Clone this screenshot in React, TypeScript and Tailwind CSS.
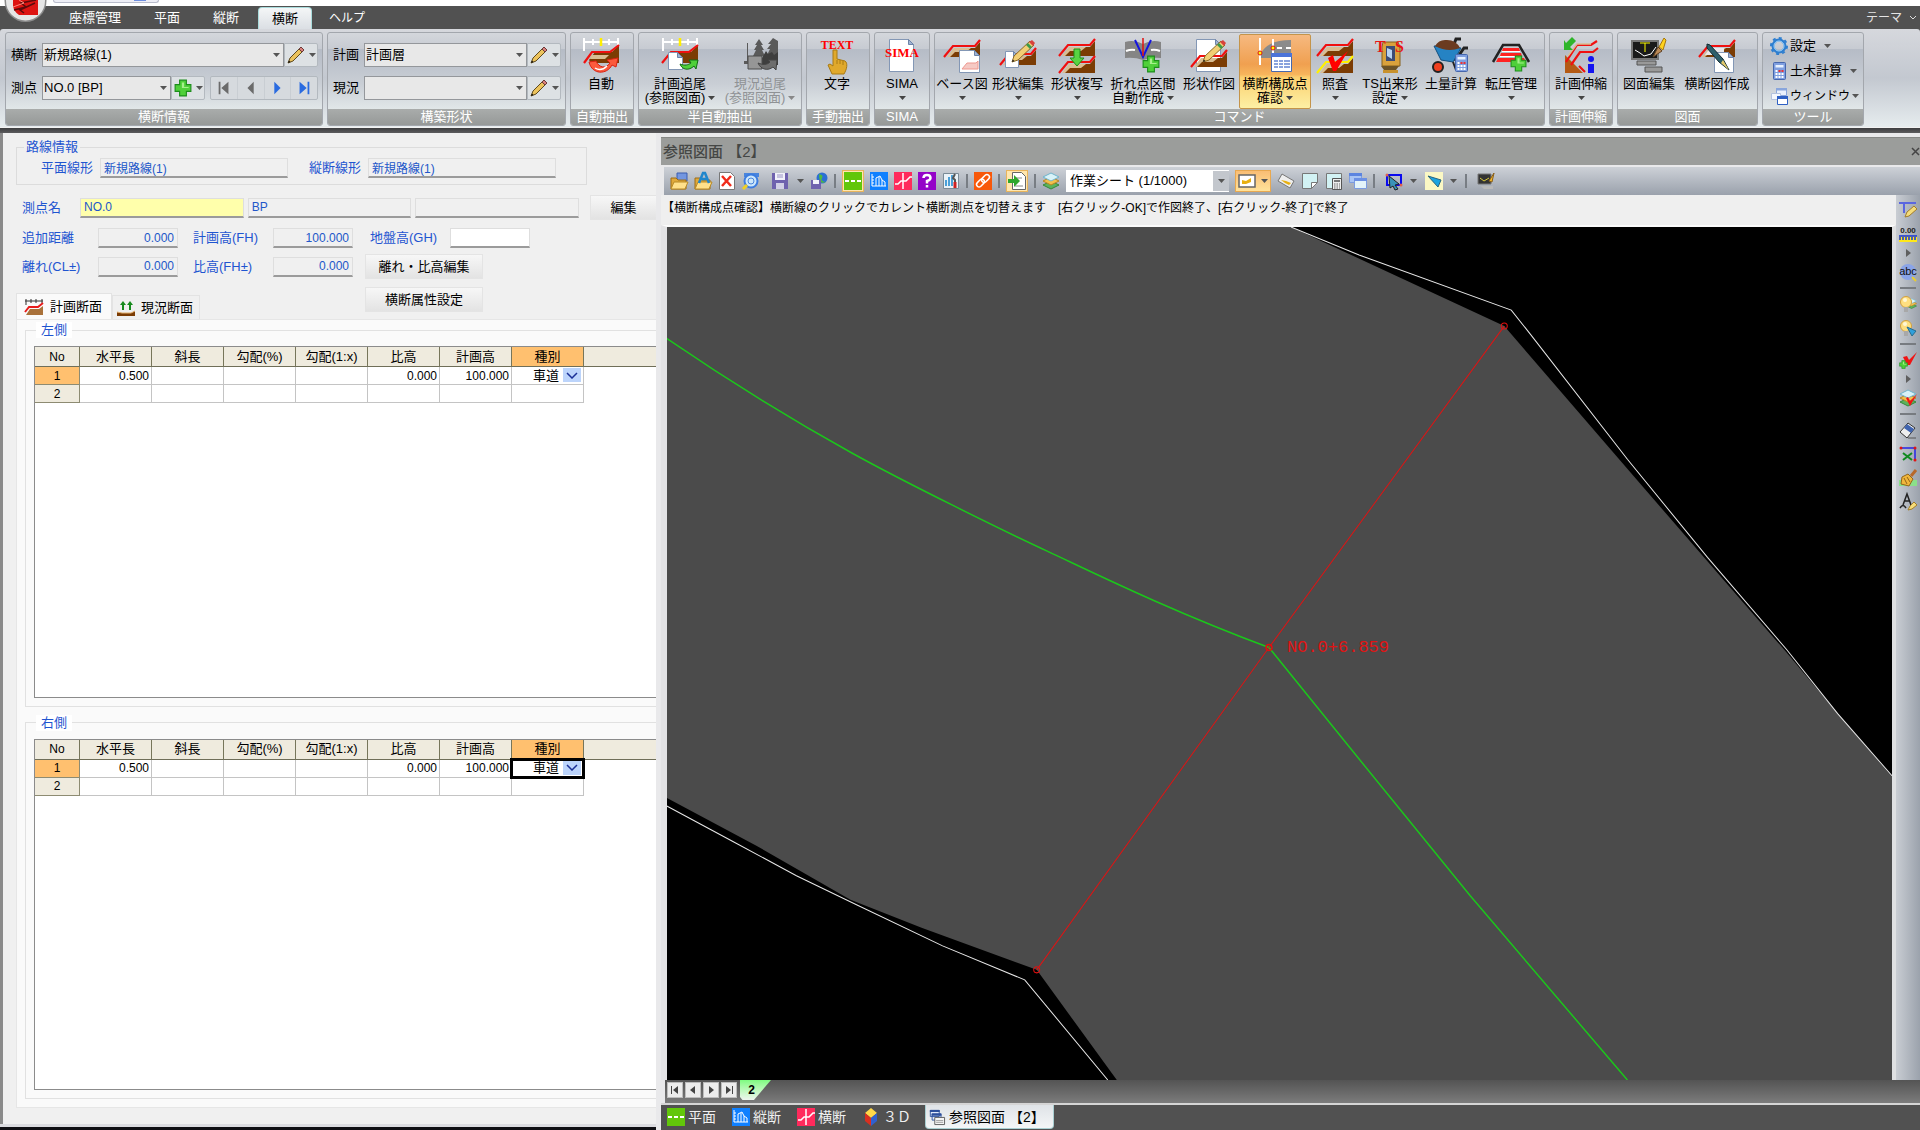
import React from 'react'

type BoxProps = { children: React.ReactNode; size?: number; view?: number }

function Svg({ children, size = 18, view = 18 }: BoxProps) {
  return (
    <svg width={size} height={size} viewBox={`0 0 ${view} ${view}`} fill="none" className="shrink-0 overflow-visible" aria-hidden="true">
      {children}
    </svg>
  )
}

function Caret({ className = 'text-[#555]' }: { className?: string }) {
  return (
    <svg width="7" height="4" viewBox="0 0 7 4" className={`shrink-0 ${className}`} aria-hidden="true">
      <path d="M0 0h7L3.5 4z" fill="currentColor" />
    </svg>
  )
}

/* ---------- shared icon parts ---------- */

// Road cross-section: brown embankment with the red design line on top
function Road({ y = 0, line = '#f01010' }: { y?: number; line?: string }) {
  return (
    <g transform={`translate(0 ${y})`}>
      <path d="M5 17 11 8h20l5-6v15z" fill="#7b3c04" />
      <path d="M3 17 10 8h17l-5 4H11l-5 5z" fill="#d9bd92" />
      <path d="M0 17 9 6h22l5-6" stroke={line} strokeWidth="2.2" />
    </g>
  )
}

function Sheet({ x, y, w = 15, h = 18 }: { x: number; y: number; w?: number; h?: number }) {
  return (
    <g transform={`translate(${x} ${y})`}>
      <path d={`M.5.5h${w - 6}l5 5v${h - 6}h-${w - 1}z`} fill="#fff" stroke="#8397b5" />
      <path d={`M${w - 5.5}.5v5h5z`} fill="#9fb4d4" stroke="#6d83a8" />
    </g>
  )
}

function PencilShape() {
  return (
    <>
      <path d="m12 24 2-6L30 3l4 4-16 15z" fill="#f2cf74" stroke="#8d6a25" />
      <path d="m26 7 4 4 2-2-4-4z" fill="#3c9a4a" />
      <path d="m29 4 4 4 2-3-3-3z" fill="#d8413c" />
      <path d="m12 24 .8-2.6 1.7 1.7z" fill="#222" />
    </>
  )
}

function Plus({ x, y, s = 16 }: { x: number; y: number; s?: number }) {
  return (
    <svg x={x} y={y} width={s} height={s} viewBox="0 0 16 16">
      <path d="M5 1h6v4h4v6h-4v4H5v-4H1V5h4z" fill="#4fd03a" stroke="#1d8d1c" />
      <path d="M7 3h2v4h4v1H7z" fill="#a6f08c" />
    </svg>
  )
}

function Ruler() {
  return (
    <>
      <path d="M1 0v13M35 0v8M0 4h36M10 1v6M26 1v6" stroke="#fff" strokeWidth="2" />
      <path d="M18 0v8" stroke="#ffef00" strokeWidth="2.5" />
    </>
  )
}

function Calc({ x, y }: { x: number; y: number }) {
  return (
    <g transform={`translate(${x} ${y})`}>
      <rect x=".5" y=".5" width="12" height="17" rx="1" fill="#7f9fe0" stroke="#4667ad" />
      <path d="M2.5 3h8v2.5h-8z" fill="#e8f2ff" />
      <path d="M2.5 8h2v2h-2zM2.5 11h2v2h-2zM2.5 14h2v2h-2zM5.5 11h2v2h-2zM5.5 14h2v2h-2zM8.5 11h2v2h-2zM8.5 14h2v2h-2z" fill="#fff" />
      <path d="M5.5 8h2v2h-2zM8.5 8h2v2h-2z" fill="#f03030" />
    </g>
  )
}

/* ---------- ribbon icons, 36 x 36 ---------- */

const ribbonIcons: Record<string, React.ReactNode> = {
  auto: (
    <>
      <Ruler />
      <path d="M6 22 12 14h17l7-7v18H8z" fill="#7b3c04" />
      <path d="M8 17h18l-4 4H7z" fill="#d9bd92" />
      <path d="M1 25 9 14h18l9-7" stroke="#f01010" strokeWidth="2.2" />
      <path d="M6 24c3 13 18 13 23 3l4 2 2-9-11 2 3 3c-4 6-11 5-14-2z" fill="#fb5a3c" stroke="#d92213" />
      <path d="M12 30q6 4 12-2" stroke="#fff" strokeWidth="1.5" />
    </>
  ),
  trace: (
    <>
      <Ruler />
      <path d="M6 24 12 14h17l7-7v18H8z" fill="#7b3c04" />
      <path d="M0 25 9 14h18l9-7" stroke="#f01010" strokeWidth="2.2" />
      <Sheet x={6} y={14} />
      <path d="M18 26c5 2 8 1 11-1l-2-3h9l-2 9-2-3c-5 5-12 4-14-2z" fill="#4fd03a" stroke="#116d16" />
    </>
  ),
  traceOff: (
    <g fill="#5a5a5a">
      <path d="m17 1-4 6h2l-3 5h2l-3 6h12l-3-6h2l-3-5h2zM31 0l-5 6h3l-4 5h3l-3 6h11V3zM5 5v18H2v3h10v-3H6V5z" />
      <path d="m20 20 4-7 2 3 4-2 2 3 4-3v13H20z" fill="#3e3e3e" />
      <path d="M6 18h14v13H6z" fill="#969696" stroke="#4d4d4d" />
      <path d="M16 25c5 2 9 2 12-1l-2-2h9l-1 10-3-3c-5 4-12 3-15-4z" fill="#6d6d6d" stroke="#444" />
    </g>
  ),
  text: (
    <>
      <text x="18" y="11" textAnchor="middle" fontSize="12" fontWeight="700" fill="#f00" fontFamily="Liberation Serif, serif">TEXT</text>
      <path d="M14 12h4v9l8 2c3 2 2 8-1 13H13l-4-9 2-1 3 2z" fill="#e0a92c" stroke="#a87a14" />
      <path d="M18 22v4m3-4v4m3-3v4" stroke="#a87a14" />
    </>
  ),
  sima: (
    <>
      <Sheet x={5} y={1} w={25} h={33} />
      <text x="18" y="19" textAnchor="middle" fontSize="13" fontWeight="700" fill="#f00" fontFamily="Liberation Serif, serif">SIMA</text>
    </>
  ),
  base: (
    <>
      <Road y={2} />
      <Sheet x={15} y={12} w={21} h={23} />
      <path d="m18 31 5-6h9l2-2v8z" fill="#f5c9c4" stroke="#ee9890" />
    </>
  ),
  edit: (
    <>
      <g transform="translate(0 10)"><Road /></g>
      <Sheet x={5} y={13} w={14} h={17} />
      <PencilShape />
    </>
  ),
  copy: (
    <>
      <Road y={1} />
      <Road y={18} />
      <path d="M15 11h6v9h4l-7 8-7-8h4z" fill="#58d442" stroke="#208e1c" />
    </>
  ),
  bend: (
    <>
      <path d="M0 4q9-3 18 2 9-5 18-2v16q-10-1-18 2Q10 19 0 20z" fill="#858585" />
      <path d="M1 13q5-2 9-1M26 12q4-1 9 1" stroke="#fff" strokeWidth="2" />
      <path d="m10 2 8 17 8-17" stroke="#1414e0" strokeWidth="2" />
      <path d="M18 0v18" stroke="#e01010" strokeWidth="1.5" />
      <Plus x={17} y={17} s={18} />
    </>
  ),
  draw: (
    <>
      <Sheet x={5} y={1} w={25} h={33} />
      <Road y={12} />
      <PencilShape />
    </>
  ),
  confirm: (
    <>
      <path d="M2 20C6 7 17 2 34 2v18z" fill="#8b8b8b" />
      <path d="M3 0v27M16 1v16M20 10h5M29 10h5" stroke="#fff" strokeWidth="2" />
      <circle cx="3" cy="15" r="2" fill="#ff0" stroke="#e01010" />
      <circle cx="16" cy="10" r="2" fill="#ff0" stroke="#e01010" />
      <path d="M14.5 15.5h20v18h-20z" fill="#fff" stroke="#4667ad" />
      <path d="M14 15h21v4H14z" fill="#4c74d8" />
      <path d="M17 22h16v2H17zm0 3h16v2H17zm0 3h16v2H17z" fill="#8aa3dd" />
      <path d="M21.5 21v11M26.5 21v11" stroke="#fff" />
    </>
  ),
  check: (
    <>
      <Road y={1} />
      <Road y={18} line="#fff000" />
      <path d="m11 20 5-3 2 7L31 13 19 33h-3z" fill="#f00" />
    </>
  ),
  ts: (
    <>
      <path d="M11 4h15l2 5v19H10V9z" fill="#d9a23c" stroke="#85601d" />
      <path d="M14 8h9v15h-9z" fill="#3d4c74" />
      <path d="m15 10 5 2v9l-5-3z" fill="#b9d3ef" />
      <path d="M9 28h18l-3 4H12z" fill="#6d5426" />
      <path d="M11 32h15v3H11z" fill="#c8922e" />
      <text x="3" y="14" fontSize="16" fontWeight="700" fill="#e81414" fontFamily="Liberation Serif, serif">T</text>
      <text x="23" y="14" fontSize="16" fontWeight="700" fill="#e81414" fontFamily="Liberation Serif, serif">S</text>
    </>
  ),
  barrow: (
    <>
      <path d="M28 1h-5l-3 8M35 10h-4l-9 13" stroke="#222" strokeWidth="3" />
      <path d="m1 8 27 2-8 14-12-2z" fill="#2583c4" stroke="#134f80" />
      <path d="M2 8q4-7 12-6 9 0 13 8-12 5-25-2z" fill="#6b3b20" />
      <circle cx="5" cy="29" r="5" fill="#f04020" stroke="#222" strokeWidth="2" />
      <path d="m20 24 3 8" stroke="#222" strokeWidth="2" />
      <Calc x={22} y={16} />
    </>
  ),
  roll: (
    <>
      <path d="M0 24 10 7h16l10 17" stroke="#222" strokeWidth="2.5" />
      <path d="M10 10h16l1 3H9zM8 15h20l1 3H7zM5 20h26l2 4H3z" fill="#f22" />
      <path d="M9 13.5h18M7 18.5h22" stroke="#fff" />
      <Plus x={17} y={17} s={17} />
    </>
  ),
  stretch: (
    <>
      <path d="M2 35V17l18 18z" fill="#b45a14" />
      <path d="M3 24 14 7h14l6-4M8 27l9-13h13l5-4M22 34 16 28" stroke="#f01010" strokeWidth="2.2" />
      <path d="m5 18 9-12h14" stroke="#d9bd92" strokeWidth="1.5" />
      <path d="M12 0 6 6 4 3v10h9l-3-3 6-6z" fill="#2fb52a" transform="translate(-3 -1)" />
      <circle cx="28" cy="21" r="3" fill="#1414f0" />
      <path d="M25 26h6v9h-6z" fill="#1414f0" />
    </>
  ),
  drawing: (
    <>
      <path d="M1 3h26v18H1z" fill="#1a1a1a" stroke="#777" strokeWidth="2" />
      <path d="M14 5v9M9 5h10" stroke="#ff0" />
      <path d="m4 12 5 3 4 3 7-2 5-7" stroke="#fff" />
      <path d="M6 23h19v4H6zM14 29h17v5H14z" fill="#999" stroke="#555" />
      <path d="m33 0-5 9 4 3 3-10z" fill="#ffd21c" stroke="#a5750c" />
      <path d="m27 9 4 4-9 6z" fill="#bd8b58" stroke="#614122" />
    </>
  ),
  section: (
    <>
      <Road y={2} />
      <path d="M6 17 11 10h14v7z" fill="#e9e9ec" />
      <Sheet x={15} y={14} w={20} h={21} />
      <path d="m8 6 3 1 13 14 6 11-10-8L8 10z" fill="#2e5f6b" stroke="#102a30" />
      <path d="m24 22 6 10-8-7z" fill="#e3c96a" />
    </>
  ),
}

/* ---------- ribbon pieces ---------- */

function RibbonGroup({ title, children, className = '' }: { title: string; children: React.ReactNode; className?: string }) {
  return (
    <section
      className={`flex flex-col shrink-0 h-[94px] rounded-[3px] border border-[#a3a7ad] overflow-hidden bg-[linear-gradient(#d4d7dc_0%,#c7cbd2_17%,#b6bcc6_18%,#c9ced5_55%,#e3e9ea_85%)] ${className}`}
    >
      <div className="flex flex-1 min-h-0">{children}</div>
      <h2 className="h-4 leading-4 text-center text-white text-[13px] bg-gradient-to-b from-[#a9acab] to-[#969998]">{title}</h2>
    </section>
  )
}

type BigButtonProps = {
  icon: string
  label: string
  sub?: string
  menu?: boolean
  active?: boolean
  disabled?: boolean
  className: string
}

function BigButton({ icon, label, sub, menu, active, disabled, className }: BigButtonProps) {
  const look = active
    ? 'border-[#c4944a] bg-[linear-gradient(#f6b980_0%,#f0a050_40%,#f7b55c_54%,#fbd070_58%,#fdf0a4_100%)]'
    : 'border-transparent'
  return (
    <button
      type="button"
      disabled={disabled}
      className={`flex flex-col items-center shrink-0 h-[75px] mt-px pt-[3px] border rounded-[2px] whitespace-nowrap leading-[14px] ${look} ${disabled ? 'text-[#8f9295]' : 'text-black'} ${className}`}
    >
      <Svg size={36} view={36}>{ribbonIcons[icon]}</Svg>
      <span className="mt-[3px]">{label}</span>
      <span className="flex items-center justify-center gap-[3px] h-[14px]">
        {sub}
        {menu && <Caret className={disabled ? 'text-[#888]' : 'text-[#444]'} />}
      </span>
    </button>
  )
}

function PencilIcon() {
  return (
    <Svg>
      <path d="m1 17 2-5L13 2l3 3L6 15z" fill="#ecc35c" stroke="#5f4a1d" />
      <path d="m12 3 3 3 2-2-3-3z" fill="#d9807c" stroke="#6b3a38" />
      <path d="m1 17 1-2.500 1.500 1.500z" fill="#111" />
    </Svg>
  )
}

function SmallMenu({ label, children }: { label: string; children: React.ReactNode }) {
  return (
    <button
      type="button"
      aria-label={label}
      className="flex items-center justify-center gap-1 w-[34px] h-6 border border-[#b3b9bf] rounded-r-[2px] bg-[#dde1e4]"
    >
      {children}
      <Caret />
    </button>
  )
}

function Combo({ id, label, value, className }: { id: string; label: string; value: string; className: string }) {
  return (
    <>
      <label htmlFor={id} className="w-[31px] shrink-0 whitespace-nowrap">{label}</label>
      <div className={`relative h-6 ${className}`}>
        <select id={id} className="w-full h-full appearance-none bg-[#e8e8e8] border border-[#94979b] pl-px pr-4 text-[13px]">
          <option>{value}</option>
        </select>
        <span className="absolute right-1 top-2 pointer-events-none flex h-2 items-center">
          <Caret />
        </span>
      </div>
    </>
  )
}

function Ribbon() {
  return (
    <div className="flex gap-[4px] pl-[5px] pt-[3px] h-[99px] bg-gradient-to-b from-[#d6d8dd] via-[#c3c8d0] to-[#e6ecee] rounded-t-[3px] border-b border-[#f2f2f2]">
      <RibbonGroup title="横断情報" className="w-[318px]">
        <div className="flex flex-col gap-[9px] pl-[5px] pt-[10px]">
          <div className="flex items-center">
            <Combo id="oudan" label="横断" value="新規路線(1)" className="w-[242px]" />
            <SmallMenu label="横断の編集"><PencilIcon /></SmallMenu>
          </div>
          <div className="flex items-center">
            <Combo id="sokuten" label="測点" value="NO.0 [BP]" className="w-[129px]" />
            <SmallMenu label="測点の追加"><Svg><Plus x={0} y={0} s={18} /></Svg></SmallMenu>
            <div className="flex ml-[5px] w-[108px] h-6 border border-[#b3b9bf] rounded-[2px] bg-[#d6dade]">
              <NavButton label="先頭" color="#6b6b6b" d="M3 2h2v14H3zM14 2v14L6 9z" />
              <NavButton label="前" color="#6b6b6b" d="M12 2v14L5 9z" />
              <NavButton label="次" color="#2a6be0" d="M6 2v14l7-7z" />
              <NavButton label="末尾" color="#2a6be0" d="M13 2h2v14h-2zM4 2v14l8-7z" />
            </div>
          </div>
        </div>
      </RibbonGroup>
      <RibbonGroup title="構築形状" className="w-[239px]">
        <div className="flex flex-col gap-[9px] pl-[5px] pt-[10px]">
          <div className="flex items-center">
            <Combo id="keikaku" label="計画" value="計画層" className="w-[163px]" />
            <SmallMenu label="計画の編集"><PencilIcon /></SmallMenu>
          </div>
          <div className="flex items-center">
            <Combo id="genkyo" label="現況" value="" className="w-[163px]" />
            <SmallMenu label="現況の編集"><PencilIcon /></SmallMenu>
          </div>
        </div>
      </RibbonGroup>
      <RibbonGroup title="自動抽出" className="w-[64px]">
        <BigButton icon="auto" label="自動" className="w-[60px]" />
      </RibbonGroup>
      <RibbonGroup title="半自動抽出" className="w-[164px]">
        <BigButton icon="trace" label="計画追尾" sub="(参照図面)" menu className="w-[82px]" />
        <BigButton icon="traceOff" label="現況追尾" sub="(参照図面)" menu disabled className="w-[78px]" />
      </RibbonGroup>
      <RibbonGroup title="手動抽出" className="w-[64px]">
        <BigButton icon="text" label="文字" className="w-[60px]" />
      </RibbonGroup>
      <RibbonGroup title="SIMA" className="w-[56px]">
        <BigButton icon="sima" label="SIMA" menu className="w-full" />
      </RibbonGroup>
      <RibbonGroup title="コマンド" className="w-[611px]">
        <BigButton icon="base" label="ベース図" menu className="w-[54px]" />
        <BigButton icon="edit" label="形状編集" menu className="w-[58px]" />
        <BigButton icon="copy" label="形状複写" menu className="w-[60px]" />
        <BigButton icon="bend" label="折れ点区間" sub="自動作成" menu className="w-[72px]" />
        <BigButton icon="draw" label="形状作図" className="w-[60px]" />
        <BigButton icon="confirm" label="横断構成点" sub="確認" menu active className="w-[72px]" />
        <BigButton icon="check" label="照査" menu className="w-[48px]" />
        <BigButton icon="ts" label="TS出来形" sub="設定" menu className="w-[62px]" />
        <BigButton icon="barrow" label="土量計算" className="w-[60px]" />
        <BigButton icon="roll" label="転圧管理" menu className="w-[60px]" />
      </RibbonGroup>
      <RibbonGroup title="計画伸縮" className="w-[64px]">
        <BigButton icon="stretch" label="計画伸縮" menu className="w-full" />
      </RibbonGroup>
      <RibbonGroup title="図面" className="w-[141px]">
        <BigButton icon="drawing" label="図面編集" className="w-[62px]" />
        <BigButton icon="section" label="横断図作成" className="w-[74px]" />
      </RibbonGroup>
      <RibbonGroup title="ツール" className="w-[102px]">
        <div className="flex flex-col gap-[7px] pl-[7px] pt-1">
          <ToolItem label="設定">
            <circle cx="9" cy="9" r="6" stroke="#2f7fd0" strokeWidth="3" />
            <circle cx="9" cy="9" r="8" stroke="#2f7fd0" strokeWidth="2" strokeDasharray="3 3.2" />
            <circle cx="9" cy="9" r="5" stroke="#a4d4f8" />
          </ToolItem>
          <ToolItem label="土木計算"><Calc x={3} y={0} /></ToolItem>
          <ToolItem label="ウィンドウ" small>
            <path d="M6.5 1.5h10v7h-10z" fill="#eaf1fd" stroke="#8aa6dc" />
            <path d="M6 1h11v2.5H6z" fill="#8aa6dc" />
            <path d="M1.5 6.5h9v6h-9z" fill="#f4f7fd" stroke="#b3c2de" />
            <path d="M7.5 9.5h10v8h-10z" fill="#fff" stroke="#2e60c4" />
            <path d="M7 9h11v3H7z" fill="#2e60c4" />
          </ToolItem>
        </div>
      </RibbonGroup>
    </div>
  )
}

function NavButton({ label, color, d }: { label: string; color: string; d: string }) {
  return (
    <button type="button" aria-label={label} className="flex flex-1 items-center justify-center border-r border-[#c9ced3] last:border-r-0">
      <Svg size={16}><path d={d} fill={color} /></Svg>
    </button>
  )
}

function ToolItem({ label, small, children }: { label: string; small?: boolean; children: React.ReactNode }) {
  return (
    <button type="button" className={`flex items-center gap-[2px] h-[18px] whitespace-nowrap ${small ? 'text-[12px]' : ''}`}>
      <Svg>{children}</Svg>
      {label}
      <span className={small ? '' : 'pl-[6px]'}><Caret /></span>
    </button>
  )
}

/* ---------- header ---------- */

function Header() {
  const tab = 'h-full px-[14px] text-white text-[13px]'
  return (
    <header className="relative">
      <div className="h-[6px] bg-white">
        <div className="ml-[53px] w-[106px] h-[3px] rounded-b-full border border-t-0 border-[#b9bccb] bg-[#eeeef6]">
          <div className="ml-20 w-3 h-px bg-[#6f8fe0]" />
        </div>
      </div>
      <nav className="flex items-stretch gap-[5px] h-[23px] pl-[55px] bg-[#515151]">
        <button type="button" className={tab}>座標管理</button>
        <button type="button" className={tab}>平面</button>
        <button type="button" className={tab}>縦断</button>
        <button
          type="button"
          className="mt-px px-[13px] text-[13px] text-black rounded-t-[4px] border border-b-0 border-[#a9dcdc] bg-gradient-to-b from-[#f4f6f7] to-[#dbdfe4]"
        >
          横断
        </button>
        <button type="button" className="h-full px-3 text-white text-[12px]">ヘルプ</button>
        <button type="button" className="flex items-center gap-2 ml-auto pr-1 text-[12px] text-[#e4e4e4]">
          テーマ
          <svg width="6" height="4" viewBox="0 0 6 4" fill="none" aria-hidden="true"><path d="m0 0 3 3 3-3" stroke="#ddd" /></svg>
        </button>
      </nav>
      <svg className="absolute left-1 top-0" width="44" height="23" viewBox="0 0 44 23" role="img" aria-label="アプリケーションメニュー">
        <circle cx="21.5" cy="1" r="21" fill="#8c8c8c" />
        <circle cx="21.5" cy="1" r="19.5" fill="#e6e6e6" />
        <path d="M9 0h25v15H15q-5-3-6-9z" fill="#dd1412" />
        <path d="m10 10 12-3-5-4 15-3M20 13l-4-3 15-7" stroke="#5c0b0b" strokeWidth="1.5" fill="none" />
        <path d="m9 7 11-4-5-3" stroke="#ff8a7c" fill="none" />
      </svg>
      <Ribbon />
      <div className="h-[5px] bg-gradient-to-b from-[#3d3d3f] to-[#5c5c5e]" />
    </header>
  )
}

/* ---------- left panel ---------- */

type FieldProps = { id: string; label: string; value: string; labelClass: string; inputClass: string; right?: boolean }

const fieldBase = 'h-5 border border-[#dedede] border-b-2 border-b-[#9b9b9b] text-[12px] text-[#2257c9] px-[3px]'

function Field({ id, label, value, labelClass, inputClass, right }: FieldProps) {
  return (
    <>
      <label htmlFor={id} className={`shrink-0 whitespace-nowrap ${labelClass}`}>{label}</label>
      <input id={id} readOnly defaultValue={value} className={`${fieldBase} ${right ? 'text-right' : ''} ${inputClass}`} />
    </>
  )
}

function PanelButton({ children, className }: { children: React.ReactNode; className: string }) {
  return (
    <button type="button" className={`h-[25px] shrink-0 text-black border border-[#e4e4e4] bg-gradient-to-b from-[#f7f7f7] to-[#e3e3e3] ${className}`}>
      {children}
    </button>
  )
}

const columns = ['No', '水平長', '斜長', '勾配(%)', '勾配(1:x)', '比高', '計画高', '種別']
const rows = [
  ['1', '0.500', '', '', '', '0.000', '100.000', '車道'],
  ['2', '', '', '', '', '', '', ''],
]

function SectionTable({ title, focused }: { title: string; focused?: boolean }) {
  return (
    <fieldset className="flex flex-col flex-1 border border-r-0 border-[#e1e1e1] pl-2 pt-2 pb-2 min-w-0">
      <legend className="ml-[2px] px-[5px] h-4 leading-4 bg-white text-[#1f55d0]">{title}</legend>
      <div className="flex-1 bg-white border border-r-0 border-[#8b8b8b] overflow-hidden">
        <table className="w-full table-fixed border-separate border-spacing-0 text-[12px] text-black">
          <colgroup>
            <col className="w-[45px]" />
            <col className="w-[72px]" />
            <col className="w-[72px]" />
            <col className="w-[72px]" />
            <col className="w-[72px]" />
            <col className="w-[72px]" />
            <col className="w-[72px]" />
            <col className="w-[72px]" />
            <col />
          </colgroup>
          <thead>
            <tr className="h-5">
              {columns.map((name) => (
                <th
                  key={name}
                  scope="col"
                  className={`p-0 leading-[18px] font-normal whitespace-nowrap border-r border-b border-r-[#77765a] border-b-[#6f6e58] ${name === 'No' ? '' : 'text-[13px]'} ${name === '種別' ? 'bg-[#ffc06f]' : 'bg-[#efebde]'}`}
                >
                  {name}
                </th>
              ))}
              <td className="p-0 bg-[#efebde] border-b border-[#6f6e58]" />
            </tr>
          </thead>
          <tbody>
            {rows.map((row) => (
              <tr key={row[0]} className="h-[18px]">
                <th
                  scope="row"
                  className={`p-0 leading-4 font-normal border-r border-b border-[#8d8b72] ${row[0] === '1' ? 'bg-[#ffc06f]' : 'bg-[#efebde]'}`}
                >
                  {row[0]}
                </th>
                {row.slice(1, 7).map((cell, i) => (
                  <td key={i} className="p-0 pr-[2px] leading-4 text-right border-r border-b border-[#c4c4c4]">{cell}</td>
                ))}
                <td className="p-0 border-r border-b border-[#c4c4c4]">
                  {row[7] && (
                    <div className={`relative h-[17px] ${focused ? 'outline-3 -outline-offset-1 outline-black' : ''}`}>
                      <select aria-label={`${title} 種別`} className="w-full h-full appearance-none pl-[21px] text-[13px]">
                        <option>{row[7]}</option>
                      </select>
                      <span className="absolute right-[2px] top-px flex items-center justify-center w-[18px] h-[14px] bg-[#bcd4fb] pointer-events-none">
                        <svg width="12" height="7" viewBox="0 0 12 7" fill="none" aria-hidden="true"><path d="m1 1 5 5 5-5" stroke="#1a2f96" strokeWidth="1.5" /></svg>
                      </span>
                    </div>
                  )}
                </td>
                <td />
              </tr>
            ))}
          </tbody>
        </table>
      </div>
    </fieldset>
  )
}

function LeftPanel() {
  return (
    <aside className="flex flex-col w-[656px] shrink-0 overflow-hidden bg-[#101014] pb-[3px]">
      <div className="flex flex-col flex-1 pl-[13px] pt-[6px] pb-4 border-l-3 border-[#8a8a8a] bg-[#f0f0f0] text-[#1f55d0]">
        <fieldset className="flex items-center w-[571px] h-[46px] border border-[#dcdcdc] pl-6 pt-[3px]">
          <legend className="ml-[-17px] px-[2px] h-4 leading-4">路線情報</legend>
          <Field id="heimen" label="平面線形" value="新規路線(1)" labelClass="w-[59px]" inputClass="w-[188px] bg-[#f0f0f0]" />
          <Field id="judan" label="縦断線形" value="新規路線(1)" labelClass="w-[59px] ml-[21px]" inputClass="w-[188px] bg-[#f0f0f0]" />
        </fieldset>
        <div className="flex items-center mt-[10px] pl-[6px]">
          <Field id="name" label="測点名" value="NO.0" labelClass="w-[58px]" inputClass="w-[164px] bg-[#ffffab]" />
          <input aria-label="測点名 2" readOnly defaultValue="BP" className={`${fieldBase} w-[164px] ml-1 bg-[#f0f0f0]`} />
          <input aria-label="測点名 3" readOnly className={`${fieldBase} w-[164px] ml-1 bg-[#f0f0f0]`} />
          <PanelButton className="ml-[11px] w-[66px] border-r-0">編集</PanelButton>
        </div>
        <div className="flex items-center mt-2 pl-[6px]">
          <Field id="tsuika" label="追加距離" value="0.000" right labelClass="w-[76px]" inputClass="w-[80px] bg-[#f0f0f0]" />
          <Field id="fh" label="計画高(FH)" value="100.000" right labelClass="w-[80px] ml-[15px]" inputClass="w-[80px] bg-[#f0f0f0]" />
          <Field id="gh" label="地盤高(GH)" value="" right labelClass="w-[80px] ml-[17px]" inputClass="w-[80px] bg-white" />
        </div>
        <div className="flex items-center mt-[6px] pl-[6px]">
          <Field id="hanare" label="離れ(CL±)" value="0.000" right labelClass="w-[76px]" inputClass="w-[80px] bg-[#f0f0f0]" />
          <Field id="hikou" label="比高(FH±)" value="0.000" right labelClass="w-[80px] ml-[15px]" inputClass="w-[80px] bg-[#f0f0f0]" />
          <PanelButton className="ml-3 w-[118px]">離れ・比高編集</PanelButton>
        </div>
        <div className="flex items-start h-8 mt-2">
          <div role="tablist" className="flex items-end w-[349px] h-full text-black">
            <button type="button" role="tab" aria-selected="true" className="flex items-center gap-[7px] h-[26px] w-[96px] pl-2 border border-b-0 border-[#e3e3e3] bg-[#fafafa] whitespace-nowrap">
              <Svg>
                <path d="M0 3h18M1 1v6M6 1v4M11 1v4M17 1v4" stroke="#333" />
                <path d="m1 17 4-6h9l4-3v9z" fill="#a9713a" />
                <path d="m0 14 4-5h9l5-4" stroke="#e81c1c" strokeWidth="2" />
              </Svg>
              計画断面
            </button>
            <button type="button" role="tab" aria-selected="false" className="flex items-center gap-[6px] h-6 w-[88px] pl-1 border border-b-0 border-[#e3e3e3] bg-[#f0f0f0] whitespace-nowrap">
              <Svg>
                <path d="M6 2 3 6h2v5h2V6h2zM13 2l-3 4h2v5h2V6h2z" fill="#178a1d" />
                <path d="M0 17v-4l5 1h9l4-2v5z" fill="#7b3c04" />
                <path d="m0 13 5 1h9l4-2" stroke="#e3b070" />
              </Svg>
              現況断面
            </button>
          </div>
          <PanelButton className="w-[118px]">横断属性設定</PanelButton>
        </div>
        <div className="flex flex-col flex-1 gap-[8px] pl-2 pt-[2px] pb-2 border border-r-0 border-[#e6e6e6] bg-[#fafafa]">
          <SectionTable title="左側" />
          <SectionTable title="右側" focused />
        </div>
      </div>
      <div className="h-[3px] bg-[#dcdce0]" />
    </aside>
  )
}

/* ---------- drawing view ---------- */

const folder = (
  <>
    <path d="M1 6h5l2 2h8v9H1z" fill="#e0a93a" stroke="#9c6d16" />
    <path d="m4 10h14l-3 7H1z" fill="#ffe08a" stroke="#b98a26" />
  </>
)
const layers = (
  <>
    <path d="m1 13 8-4 8 4-8 4z" fill="#5cb35c" stroke="#36883a" />
    <path d="m1 9 8-4 8 4-8 4z" fill="#f2c04c" stroke="#bb8420" />
    <path d="m1 5 8-4 8 4-8 4z" fill="#d8f2f8" stroke="#70b4cc" />
  </>
)
const planIcon = (
  <>
    <path d="M0 0h18v18H0z" fill="#62c60a" />
    <path d="M1 9h4M7 9h4M13 9h4" stroke="#fff" strokeWidth="2" />
  </>
)
const profileIcon = (
  <>
    <path d="M0 0h18v18H0z" fill="#0f80ff" />
    <path d="M2 2v12h14M2 5h2M2 8h2M2 11h2M6 14V6l4-2 2 4 3 2v4M9 5v9M12 8v6" stroke="#fff" />
  </>
)
const crossIcon = (
  <>
    <path d="M0 0h18v18H0z" fill="#ff2a5c" />
    <path d="M9 1v16M1 12h3l3-3h5l4-4h2" stroke="#fff" strokeWidth="1.5" />
  </>
)

function ToolButton({ label, children }: { label: string; children: React.ReactNode }) {
  return (
    <button type="button" aria-label={label} className="shrink-0">
      <Svg>{children}</Svg>
    </button>
  )
}

function LitButton({ label, children }: { label: string; children: React.ReactNode }) {
  return (
    <button type="button" aria-label={label} className="flex items-center justify-center w-[22px] h-[22px] shrink-0 border border-[#e8b45c] bg-[#ffe6ae]">
      <Svg>{children}</Svg>
    </button>
  )
}

function Sep() {
  return <span className="w-[2px] h-[14px] shrink-0 bg-[#787d84]" />
}

function DrawingToolbar() {
  return (
    <div className="flex items-center gap-[6px] h-7 pl-[6px] bg-gradient-to-b from-[#cdd1d7] to-[#9aa1ac]">
      <ToolButton label="開く">
        <path d="M7 1h10v8H7z" fill="#7396e0" stroke="#3a5cae" />
        {folder}
      </ToolButton>
      <ToolButton label="図面を開く">
        {folder}
        <path d="m5 11 4-10h2l4 10M7 7h6" stroke="#1f86cc" strokeWidth="2.5" />
      </ToolButton>
      <ToolButton label="閉じる">
        <path d="M1.500.5h11l4 4v13h-15z" fill="#fff" stroke="#777" />
        <path d="m4 4 9 10M13 4 4 14" stroke="#f02c1c" strokeWidth="2.5" />
      </ToolButton>
      <ToolButton label="検索">
        <path d="M2 1h15v4H2z" fill="#4a85dc" />
        <circle cx="9" cy="9" r="6.5" fill="#cde7fb" stroke="#3c7ce0" strokeWidth="2" />
        <circle cx="9" cy="9" r="3" stroke="#4a85dc" />
        <path d="m5 13-4 4" stroke="#f0d020" strokeWidth="3" />
      </ToolButton>
      <span className="flex items-center gap-2 ml-[5px]">
        <ToolButton label="保存">
          <path d="M1 1h16v16H1z" fill="#6f62ae" />
          <path d="M4 1h10v7H4z" fill="#f2f2fa" />
          <path d="M5 11h8v6H5z" fill="#d2d0e6" />
          <path d="M6 3h6M6 5h6" stroke="#9a94c4" />
        </ToolButton>
        <Caret />
      </span>
      <ToolButton label="Web保存">
        <circle cx="12" cy="6" r="5.5" fill="#2c6fd4" />
        <path d="M9 2q5 1 3 4t4 4q-5 2-6-1T9 2z" fill="#4fba3e" />
        <path d="M1 8h10v9H1z" fill="#6f62ae" />
        <path d="M3 8h6v4H3z" fill="#f2f2fa" />
      </ToolButton>
      <Sep />
      <LitButton label="平面">{planIcon}</LitButton>
      <ToolButton label="縦断">{profileIcon}</ToolButton>
      <ToolButton label="横断">{crossIcon}</ToolButton>
      <ToolButton label="ヘルプ">
        <path d="M0 0h18v18H0z" fill="#9404c8" />
        <path d="M5.500 6q0-3 3.500-3t3.500 3q0 2-3.500 3v2.500M9 13v2.500" stroke="#fff" strokeWidth="2.5" />
      </ToolButton>
      <ToolButton label="設定">
        <path d="M1.500 1.500h15v15h-15z" fill="#eaf2f8" stroke="#7a8a96" />
        <path d="M4 14V8M7 14V5M10 14V3" stroke="#4aa0d8" strokeWidth="2" />
        <path d="m13 2-2 4 2 2v8" stroke="#555" strokeWidth="2" />
        <path d="M13 10v6" stroke="#d02020" strokeWidth="3" />
      </ToolButton>
      <Sep />
      <ToolButton label="リンク">
        <path d="M0 0h18v18H0z" fill="#f8580a" />
        <rect x="2" y="8.500" width="9" height="5" rx="2.5" stroke="#fff" strokeWidth="1.5" transform="rotate(-45 6.500 11)" />
        <rect x="7" y="4" width="9" height="5" rx="2.5" stroke="#fff" strokeWidth="1.5" transform="rotate(-45 11.500 6.500)" />
      </ToolButton>
      <Sep />
      <LitButton label="取込み">
        <path d="M4.500.5h9l4 4v13h-13z" fill="#fff" stroke="#666" />
        <path d="M7 6h7M7 14h8" stroke="#888" />
        <path d="M0 7h6V3l6 6-6 6v-4H0z" fill="#2ea62c" />
      </LitButton>
      <Sep />
      <ToolButton label="レイヤ">{layers}</ToolButton>
      <div className="relative w-[163px] h-[22px] shrink-0">
        <select aria-label="作業シート" className="w-full h-full appearance-none bg-white pl-[4px] text-[13px]">
          <option>作業シート (1/1000)</option>
        </select>
        <span className="absolute right-0 top-px flex items-center justify-center w-4 h-5 bg-[#c3c7cd] pointer-events-none">
          <Caret />
        </span>
      </div>
      <button type="button" aria-label="画像表示" className="flex items-center justify-center gap-[5px] w-9 h-[22px] shrink-0 border border-[#e8a850] bg-gradient-to-b from-[#f9bd74] to-[#ffe29a]">
        <Svg>
          <path d="M1 3h16v12H1z" fill="#fff" stroke="#666" strokeWidth="1.5" />
          <path d="M4 12V8l4 1 5-3v4l-5 2z" fill="#e8b010" />
        </Svg>
        <Caret />
      </button>
      <ToolButton label="画像">
        <path d="m5 2 12 7-4 7L1 9z" fill="#eee" stroke="#777" />
        <path d="m4 8 5 1 5 2-2 2-4-2z" fill="#e8b010" />
      </ToolButton>
      <ToolButton label="シート">
        <path d="M1.500 1.500h15v9l-6 6h-9z" fill="#d2f2f4" stroke="#777" />
        <path d="M10.500 16.500v-6h6z" fill="#fff" stroke="#777" />
      </ToolButton>
      <ToolButton label="シート計算">
        <path d="M1.500 1.500h15v15h-15z" fill="#d2f2f4" stroke="#777" />
        <path d="M7.500 6.500h9v11h-9z" fill="#eee" stroke="#555" />
        <path d="M9 8h6v2H9z" fill="#777" />
        <path d="M9 12h6M9 14h6M9 16h6" stroke="#666" strokeDasharray="1.5 1" />
      </ToolButton>
      <ToolButton label="ウィンドウ">
        <path d="M.500 1.500h12v9h-12z" fill="#a9c4f4" stroke="#7c9ce0" />
        <path d="M0 1h13v3H0z" fill="#5c84e0" />
        <path d="M5.500 6.500h12v10h-12z" fill="#e4f4fa" stroke="#7c9ce0" />
        <path d="M5 6h13v3H5z" fill="#6c90e4" />
      </ToolButton>
      <Sep />
      <span className="flex items-center gap-[7px] ml-1">
        <ToolButton label="範囲選択">
          <path d="M2 3h14v10H2z" stroke="#0a0af0" strokeWidth="2" />
          <path d="m4 4 10 8-4 1 3 4-3 1-2-4-3 2z" fill="#3a93b8" stroke="#222" />
          <circle cx="2" cy="3" r="1.5" fill="#e06050" />
          <circle cx="16" cy="13" r="1.5" fill="#e06050" />
        </ToolButton>
        <Caret />
      </span>
      <span className="flex items-center gap-[7px] mx-[2px]">
        <ToolButton label="選択">
          <path d="M0 0h18v18H0z" fill="#fbf8c4" />
          <path d="m3 4 13 4-3 7z" fill="#1ba4e0" stroke="#28647e" />
        </ToolButton>
        <Caret />
      </span>
      <Sep />
      <span className="flex ml-1">
        <ToolButton label="図面編集">
          <path d="M1 2h13v10H1z" fill="#333" stroke="#777" />
          <path d="m3 6 4 3 5-3" stroke="#d9c93a" />
          <path d="M4 14h12v3H7z" fill="#b9b9b9" />
          <path d="m17 1-5 8 3 1z" fill="#f2b830" stroke="#8a5f18" />
        </ToolButton>
      </span>
    </div>
  )
}

function SideTools() {
  const arrow = <svg width="6" height="8" viewBox="0 0 6 8" aria-hidden="true"><path d="m1 0 5 4-5 4z" fill="#5f5f5f" /></svg>
  const sep = <span className="w-4 h-[2px] bg-[#777b80]" />
  const bulb = (
    <>
      <circle cx="7" cy="7" r="5.5" fill="#ffdf80" stroke="#d2a040" />
      <path d="M5 12h4v5H5z" fill="#a8a8a8" />
      <circle cx="6" cy="5" r="2" fill="#fff7d6" />
    </>
  )
  return (
    <div className="flex flex-col items-center gap-[6px] w-6 shrink-0 pt-[6px] bg-gradient-to-r from-[#c9cdd3] to-[#9ba2ac]">
      <ToolButton label="寸法線">
        <path d="M0 2h17M5 2v10" stroke="#5a66e0" strokeWidth="2" />
        <path d="m6 16 2-5 7-6 3 3-8 7z" fill="#f5dc7a" stroke="#a37d2a" />
      </ToolButton>
      <ToolButton label="距離">
        <text x="9" y="8" textAnchor="middle" fontSize="8" fontWeight="700" fill="#222" fontFamily="Liberation Sans, sans-serif">0.00</text>
        <path d="M0 11h18v6H0z" fill="#ffe818" />
        <path d="M0 11h18M1 12v3M4 12v3M7 12v3M10 12v3M13 12v3M16 12v3" stroke="#1030e0" strokeWidth="1.5" />
      </ToolButton>
      {arrow}
      <ToolButton label="文字検索">
        <circle cx="9" cy="9" r="8" fill="#8aa4e8" />
        <text x="9" y="12" textAnchor="middle" fontSize="11" fill="#111" fontFamily="Liberation Sans, sans-serif">abc</text>
        <path d="m13 14 4 4" stroke="#e8cc30" strokeWidth="2" />
      </ToolButton>
      {sep}
      <ToolButton label="レイヤ表示">
        <g transform="translate(7 3) scale(.62)">{layers}</g>
        {bulb}
      </ToolButton>
      <ToolButton label="要素表示">
        {bulb}
        <path d="m8 8 9 4-4 5z" fill="#2fa0dc" stroke="#2a6c8c" />
      </ToolButton>
      {sep}
      <ToolButton label="チェック追加">
        <path d="m4 6 4-1 2 4 8-8-7 13H8z" fill="#f01414" />
        <Plus x={0} y={9} s={9} />
      </ToolButton>
      {arrow}
      <ToolButton label="レイヤ確認">
        {layers}
        <path d="m7 9 2-1 2 4 7-7-7 12z" fill="#f01414" />
      </ToolButton>
      {sep}
      <ToolButton label="消去">
        <path d="m1 11 8-9 7 5-8 10z" fill="#eee" stroke="#333" />
        <path d="m5 7 7 5 3-4-7-5z" fill="#3f64b0" />
        <path d="M9 17h8" stroke="#555" />
      </ToolButton>
      <ToolButton label="トリム">
        <path d="M1 3h15v13" stroke="#2424e8" strokeWidth="1.5" />
        <path d="m4 8 9 7M13 8l-9 7" stroke="#108a20" strokeWidth="2" />
        <circle cx="2" cy="3" r="1.5" fill="#e01414" />
        <circle cx="16" cy="3" r="1.5" fill="#e01414" />
        <circle cx="16" cy="15" r="1.5" fill="#e01414" />
      </ToolButton>
      <ToolButton label="属性クリア">
        <path d="M0 11h18v6H0z" fill="#8be08a" />
        <path d="m17 1-5 6" stroke="#b8682a" strokeWidth="3" />
        <path d="m3 8 6-3 5 5-4 7-8-2z" fill="#f0b63c" stroke="#93651a" />
        <path d="m5 9 3 6M8 8l3 5" stroke="#93651a" />
      </ToolButton>
      <ToolButton label="文字編集">
        <path d="m4 12 4-11 4 11M5 8h6M1 15q3-5 6 0" stroke="#222" strokeWidth="1.5" />
        <path d="m9 17 2-4 4-4 3 3-5 4z" fill="#f5dc7a" stroke="#a37d2a" />
      </ToolButton>
    </div>
  )
}

// Plan view, drawn in canvas units
function Canvas() {
  return (
    <svg
      viewBox="0 0 1225 852"
      preserveAspectRatio="xMidYMid slice"
      className="block flex-1 min-w-0 h-0 min-h-full bg-[#4b4b4b]"
      role="img"
      aria-label="参照図面"
    >
      <path d="M624 0 837 99 975 259 1119 425 1170 486 1225 550V0z" fill="#000" />
      <path d="M0 570 90 618 184 672 255 700 370 742 450 852H0z" fill="#000" />
      <path d="M624 0 692 28 844 83 863 107 960 232 1040 330 1119 422 1170 486 1225 549" stroke="#e8e8e8" fill="none" />
      <path d="M0 578 67 614 130 648 190 677 276 718 358 752 441 852" stroke="#e8e8e8" fill="none" />
      <path d="M0 111C60 152 130 195 184 225S340 305 381 324S500 382 602 420L673 508 803 668 960 852" stroke="#1bc61b" strokeWidth="1.5" fill="none" />
      <path d="M837 99 602 420 370 742" stroke="#dc1414" fill="none" />
      <circle cx="837" cy="99" r="3" stroke="#e01010" fill="none" />
      <circle cx="602" cy="420" r="3" stroke="#e01010" strokeWidth="1.5" fill="none" />
      <circle cx="370" cy="742" r="3" stroke="#e01010" fill="none" />
      <text x="620" y="425" fontSize="17" fill="#e01414" fontFamily="Liberation Mono, monospace">NO.0+6.859</text>
    </svg>
  )
}

function SheetBar() {
  const btn = 'flex items-center justify-center w-4 h-4 bg-[#ececec] border border-[#bdbdbd]'
  const arrows = [
    { label: '最初のシート', d: 'M2 2h1v8H2zM9 2v8L4 6z' },
    { label: '前のシート', d: 'M8 2v8L3 6z' },
    { label: '次のシート', d: 'M4 2v8l5-4z' },
    { label: '最後のシート', d: 'M9 2h1v8H9zM3 2v8l5-4z' },
  ]
  return (
    <div className="flex items-start h-[23px] pl-[2px] bg-gradient-to-b from-[#545454] to-[#7c7c7c]">
      <div className="flex gap-[2px] pt-[2px]">
        {arrows.map((a) => (
          <button key={a.label} type="button" aria-label={a.label} className={btn}>
            <Svg size={12} view={12}><path d={a.d} fill="#444" /></Svg>
          </button>
        ))}
      </div>
      <button type="button" className="w-[31px] h-5 ml-[3px] pr-2 text-center text-[12px] font-bold leading-5 text-black bg-gradient-to-b from-[#7dfb80] to-[#eef4ee] [clip-path:polygon(0_0,100%_0,45%_100%,8%_100%,0_85%)]">
        2
      </button>
    </div>
  )
}

function ViewTabs() {
  const tab = 'flex items-center gap-[3px] text-[#f0f0f0] whitespace-nowrap'
  return (
    <div className="flex items-stretch gap-[16px] h-[25px] pl-[6px] bg-[#515151] text-[14px] pb-px">
      <button type="button" className={tab}><Svg>{planIcon}</Svg>平面</button>
      <button type="button" className={tab}><Svg>{profileIcon}</Svg>縦断</button>
      <button type="button" className={tab}><Svg>{crossIcon}</Svg>横断</button>
      <button type="button" className={tab}>
        <Svg>
          <path d="m9 0 6 5-6 5-6-5z" fill="#ffd84a" />
          <path d="M3 5v8l6 5V10z" fill="#d83020" />
          <path d="M15 5v8l-6 5V10z" fill="#3060d0" />
        </Svg>
        ３Ｄ
      </button>
      <button type="button" className="flex items-center gap-1 -ml-[2px] pl-[3px] pr-2 text-black whitespace-nowrap rounded-b-[4px] border border-t-0 border-[#a9cfd2] bg-gradient-to-b from-[#dfe3e7] to-[#f4f6f7]">
        <Svg size={16}>
          <path d="M1.500 1.500h10v7h-10zM3.500 5.500h10v7h-10z" fill="#dfe8fb" stroke="#2c4f9c" />
          <path d="M1 1h11v2.500H1zM3 5h11v2.500H3z" fill="#2c4f9c" />
          <path d="M6.500 9.500h11v8h-11z" fill="#f4f4f4" stroke="#555" />
          <path d="M8 13h8M8 15h8" stroke="#999" />
        </Svg>
        参照図面 【2】
      </button>
    </div>
  )
}

function DrawingView() {
  return (
    <main className="flex flex-col flex-1 min-w-0 pl-[5px] pt-[4px] bg-[#e9e9eb]">
      <div className="flex items-center justify-between h-[28px] pl-[2px] bg-[#9b9d9b] border-t border-[#868886] text-[15px] font-medium text-[#454745]">
        参照図面 【2】
        <button type="button" aria-label="閉じる">
          <svg width="9" height="9" viewBox="0 0 9 9" fill="none" aria-hidden="true"><path d="m1 1 7 7M8 1 1 8" stroke="#444" strokeWidth="1.5" /></svg>
        </button>
      </div>
      <div className="pl-[3px] pt-[2px]">
        <DrawingToolbar />
      </div>
      <div className="flex flex-1 min-h-0">
        <div className="flex flex-col flex-1 min-w-0">
          <p className="h-[30px] pl-px leading-[27px] bg-[#efefef] text-[12px] text-black whitespace-nowrap">
            【横断構成点確認】横断線のクリックでカレント横断測点を切替えます　[右クリック-OK]で作図終了、[右クリック-終了]で終了
          </p>
          <div className="flex flex-1 min-h-0 border-t-2 border-t-[#fbfbfb] border-l-6 border-l-[#e3e3e5] border-r-4 border-r-[#dfe0e2]">
            <Canvas />
          </div>
        </div>
        <SideTools />
      </div>
      <div className="pl-[4px]">
        <SheetBar />
      </div>
      <div className="h-[2px] bg-[#d5d5d5]" />
      <ViewTabs />
    </main>
  )
}

export default function App() {
  return (
    <div className="flex flex-col min-h-screen overflow-hidden bg-[#515151] text-[13px] leading-4 text-black font-['Liberation_Sans','Noto_Sans_CJK_JP',sans-serif]">
      <Header />
      <div className="flex flex-1">
        <LeftPanel />
        <DrawingView />
      </div>
    </div>
  )
}
